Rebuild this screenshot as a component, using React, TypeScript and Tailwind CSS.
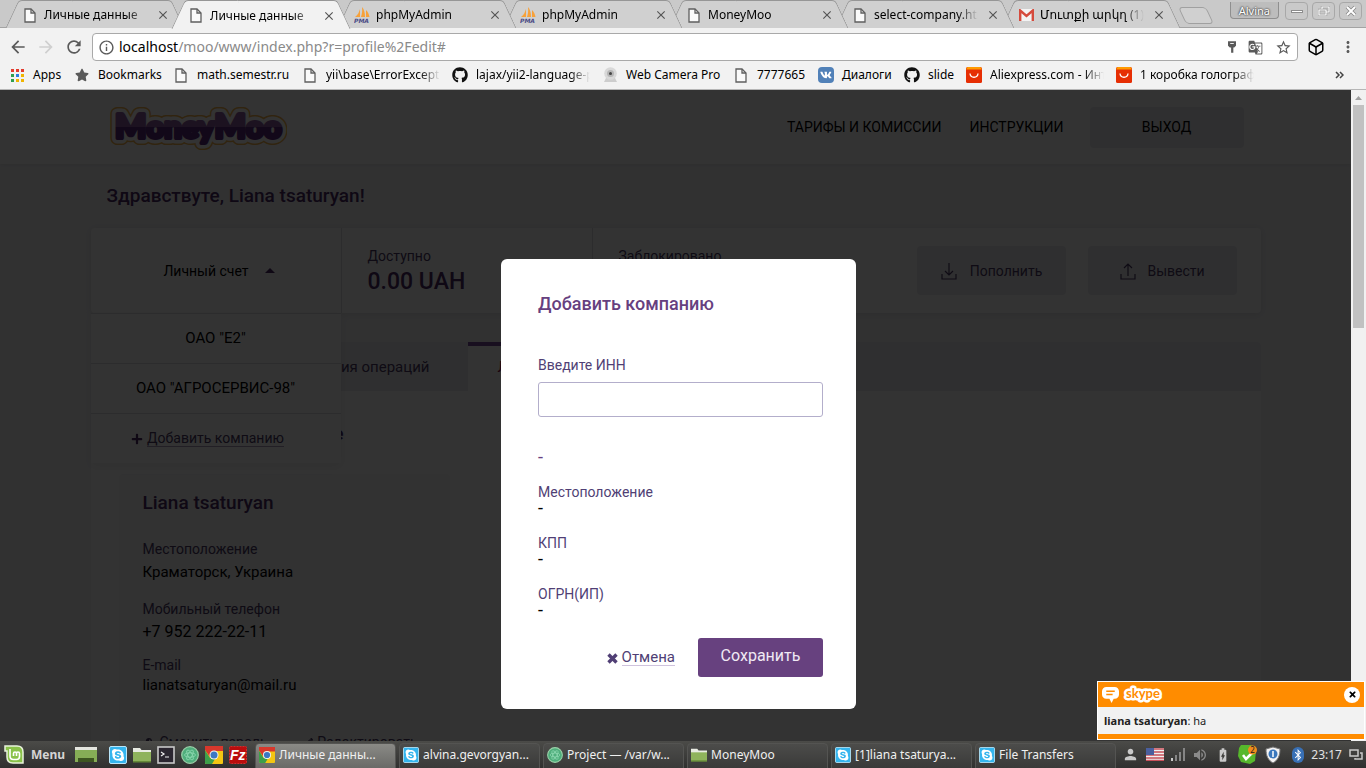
import React from "react";
import { FaGithub, FaVk, FaStar, FaPlus, FaTimes, FaSkype, FaBluetoothB, FaKey, FaPencilAlt } from "react-icons/fa";
import { MdArrowBack, MdArrowForward, MdRefresh, MdInfoOutline, MdStarBorder, MdGTranslate, MdMoreVert, MdClose, MdVolumeUp, MdPerson, MdBatteryChargingFull } from "react-icons/md";
import { Box } from "lucide-react";

const fade = "overflow-hidden whitespace-nowrap [mask-image:linear-gradient(to_right,black_calc(100%-20px),transparent)]";

function PageIcon() {
  return (
    <svg width="12" height="15" viewBox="0 0 12 15" fill="#fafafa" stroke="#5f5f5f" strokeWidth="1.3" className="shrink-0">
      <path d="M1 1h6l4 4v9H1z" />
      <path d="M7 1v4h4" fill="none" />
    </svg>
  );
}

function PmaIcon() {
  return (
    <svg width="17" height="16" viewBox="0 0 17 16" className="shrink-0">
      <path d="M6 2v8H1c3-2 4-5 5-8zM8 0c2 2 3 6 3 10H7c1-3 1.500-6 1-10zM12 3c2 2 3 4 3.500 7H12z" fill="#f7a13a" />
      <text x="0" y="16" fontSize="6" fontWeight="700" fontStyle="italic" fontFamily="DejaVu Sans" fill="#4a4a86">PMA</text>
    </svg>
  );
}

function GmailIcon() {
  return (
    <svg width="15" height="12" viewBox="0 0 15 12" className="shrink-0">
      <rect width="15" height="12" rx="1" fill="#f3f3f3" />
      <path d="M1.200 12V1.500L7.500 7l6.300-5.500V12" fill="none" stroke="#d54b3d" strokeWidth="2.400" />
    </svg>
  );
}

function AliIcon() {
  return (
    <svg width="16" height="16" viewBox="0 0 16 16" className="shrink-0">
      <rect width="16" height="16" rx="1.500" fill="#e62e04" />
      <path d="M1.500 0h13L16 2.500H0z" fill="#ff9a00" />
      <path d="M4 6.500c.5 5 7.500 5 8 0" fill="none" stroke="#fff" strokeWidth="1.300" />
    </svg>
  );
}

function ChromeIcon({ size = 18 }: { size?: number }) {
  return (
    <svg width={size} height={size} viewBox="0 0 18 18" className="shrink-0">
      <rect width="18" height="18" rx="1" fill="#f4c613" />
      <path d="M0 0h18v5H9L5 11 0 4z" fill="#d8382c" />
      <path d="M0 4l5 8 5 1-3 5H1a1 1 0 0 1-1-1z" fill="#3d9f4a" />
      <circle cx="9" cy="9" r="4.500" fill="#f3f3f3" />
      <circle cx="9" cy="9" r="3.500" fill="#3c78c3" />
    </svg>
  );
}

function SkypeIcon({ size = 18 }: { size?: number }) {
  return (
    <svg width={size} height={size} viewBox="0 0 18 18" className="shrink-0">
      <rect x=".5" y=".5" width="17" height="17" rx="1.500" fill="#35b5ee" stroke="#b9e6fa" />
      <FaSkype x="2" y="2" size={14} color="#fff" />
    </svg>
  );
}

function FolderIcon({ size = 18 }: { size?: number }) {
  return (
    <svg width={size} height={size} viewBox="0 0 18 18" className="shrink-0">
      <path d="M0 2h7l1.500 2H18v4H0z" fill="#e8ebe2" />
      <path d="M0 6h18v10H0z" fill="#8fb35c" />
      <path d="M0 15h18v1.500H0z" fill="#658a38" />
    </svg>
  );
}

function AtomIcon({ size = 18 }: { size?: number }) {
  return (
    <svg width={size} height={size} viewBox="0 0 18 18" fill="none" stroke="#8fd9b2" strokeWidth=".8" className="shrink-0">
      <circle cx="9" cy="9" r="8.300" fill="#4fae7c" stroke="#9ad0a8" strokeWidth="1.200" />
      <ellipse cx="9" cy="9" rx="5.500" ry="2.200" />
      <ellipse cx="9" cy="9" rx="5.500" ry="2.200" transform="rotate(60 9 9)" />
      <ellipse cx="9" cy="9" rx="5.500" ry="2.200" transform="rotate(120 9 9)" />
    </svg>
  );
}

function DesktopIcon() {
  return (
    <svg width="22" height="18" viewBox="0 0 22 18">
      <path d="M0 1h22v15H0z" fill="#86ad56" />
      <path d="M0 1h22v3H0z" fill="#e4e6df" />
      <path d="M3 12h16v4H3z" fill="#3d5520" />
    </svg>
  );
}

function MintIcon() {
  return (
    <svg width="20" height="19" viewBox="0 0 20 19" fill="none">
      <path d="M1 1h12c4 0 6 2 6 6v11H9c-4 0-6-2-6-6V6H1z" fill="#8ac24a" stroke="#e9f3dc" strokeWidth="1.500" />
      <path d="M6 4v7c0 2 1 3.500 3.500 3.500h3c2 0 3-1 3-3V8.500c0-2-3-2-3 0V11M12.500 8.500c0-2-3-2-3 0V11" stroke="#fff" strokeWidth="1.600" />
    </svg>
  );
}

function TerminalIcon() {
  return (
    <svg width="18" height="18" viewBox="0 0 18 18">
      <rect x="1" y="1" width="16" height="16" fill="#2b2630" stroke="#c9c9c9" strokeWidth="1.600" />
      <path d="M4 6l3 2-3 2M8 11h4" fill="none" stroke="#eee" strokeWidth="1.200" />
    </svg>
  );
}

function FilezillaIcon() {
  return (
    <svg width="18" height="18" viewBox="0 0 18 18">
      <rect x=".5" y=".5" width="17" height="17" rx="1" fill="#bb0d0d" stroke="#d92a2a" strokeDasharray="2 1" />
      <text x="1" y="14" fontSize="14" fontWeight="700" fontStyle="italic" fontFamily="Liberation Sans" fill="#fff">Fz</text>
    </svg>
  );
}

function WebcamIcon() {
  return (
    <svg width="15" height="16" viewBox="0 0 15 16" className="shrink-0">
      <path d="M3 11h9l2 4H1z" fill="#cdcdcd" />
      <circle cx="7.500" cy="6.500" r="6.300" fill="#d8d8d8" />
      <circle cx="7.500" cy="6.500" r="3.500" fill="#b5b5b5" />
      <circle cx="7.500" cy="6.500" r="1.500" fill="#444" />
    </svg>
  );
}

function AppsIcon() {
  const colors = ["#e33b2e", "#e33b2e", "#e33b2e", "#2f9e4f", "#2b7de1", "#f0b400", "#2f9e4f", "#f0b400", "#f0b400"];
  return (
    <svg width="13" height="13" viewBox="0 0 13 13" className="shrink-0">
      {colors.map((c, i) => (
        <rect key={i} x={(i % 3) * 5} y={Math.floor(i / 3) * 5} width="3" height="3" fill={c} />
      ))}
    </svg>
  );
}

type TabProps = { icon: React.ReactNode; title: string; active?: boolean; order: string };

function BrowserTab({ icon, title, active, order }: TabProps) {
  const tone = active
    ? "before:bg-[#f2f2f2] after:bg-[#f2f2f2] h-[29px]"
    : "before:bg-[#d0d0d0] after:bg-[#d0d0d0] h-7";
  return (
    <div
      className={`relative isolate flex w-[166px] pt-[2px] items-center px-2 before:absolute before:inset-y-0 before:left-0 before:-z-10 before:w-3/5 before:-skew-x-[25deg] before:rounded-tl-sm before:border-l before:border-t before:border-[#969696] before:content-[''] after:absolute after:inset-y-0 after:right-0 after:-z-10 after:w-3/5 after:skew-x-[25deg] after:rounded-tr-sm after:border-r after:border-t after:border-[#969696] after:content-[''] ${tone} ${order}`}
    >
      <span className="flex w-5 shrink-0 justify-center">{icon}</span>
      <a href="#" className={`ml-1 min-w-0 flex-1 ${fade}`}>{title}</a>
      <button type="button" aria-label="Close tab" className="ml-2 shrink-0 text-[#555]">
        <MdClose size={14} />
      </button>
    </div>
  );
}

function TabStrip() {
  return (
    <div className="flex h-7 items-start bg-[#c9c9c9] pl-3 shadow-[inset_0_-1px_0_#a3a3a3]">
      <BrowserTab icon={<PageIcon />} title="Личные данные" order="z-[7]" />
      <BrowserTab icon={<PageIcon />} title="Личные данные" active order="z-[10]" />
      <BrowserTab icon={<PmaIcon />} title="phpMyAdmin" order="z-[6]" />
      <BrowserTab icon={<PmaIcon />} title="phpMyAdmin" order="z-[5]" />
      <BrowserTab icon={<PageIcon />} title="MoneyMoo" order="z-[4]" />
      <BrowserTab icon={<PageIcon />} title="select-company.html" order="z-[3]" />
      <BrowserTab icon={<GmailIcon />} title="Մուտքի արկղ (1)" order="z-[2]" />
      <button type="button" aria-label="New tab" className="ml-2 mt-[7px] h-[17px] w-7 skew-x-[25deg] rounded-sm border border-[#a0a0a0] bg-[#d0d0d0]" />
      <div className="ml-auto flex items-start gap-1 pr-1 pt-[2px]">
        <button type="button" className="mr-[2px] h-[17px] rounded-b-sm border border-t-0 border-[#8f8f8f] bg-[#bdbdbd] px-2 text-[11px] leading-[15px] text-white [text-shadow:0_0_2px_#333,0_0_2px_#333]">Alvina</button>
        <button type="button" aria-label="Minimize" className="flex h-[18px] w-[23px] items-center justify-center rounded-sm border border-[#a8a8a8]">
          <span className="h-[3px] w-3 border border-[#8d8d8d] bg-white" />
        </button>
        <button type="button" aria-label="Restore" className="flex h-[18px] w-[23px] items-center justify-center rounded-sm border border-[#a8a8a8]">
          <svg width="12" height="10" viewBox="0 0 12 10" fill="none">
            <path d="M4 3V1h7v5H8M1 4h7v5H1z" stroke="#999" strokeWidth="2.400" />
            <path d="M4 3V1h7v5H8M1 4h7v5H1z" stroke="#fff" strokeWidth="1.200" />
          </svg>
        </button>
        <button type="button" aria-label="Close" className="flex h-[18px] w-[23px] items-center justify-center rounded-sm border border-[#a8a8a8]">
          <svg width="12" height="12" viewBox="0 0 12 12" fill="none">
            <path d="M2 2l8 8M10 2l-8 8" stroke="#888" strokeWidth="3.600" />
            <path d="M2 2l8 8M10 2l-8 8" stroke="#fff" strokeWidth="2" />
          </svg>
        </button>
      </div>
    </div>
  );
}

function Toolbar() {
  return (
    <div className="flex h-[33px] items-center bg-[#f2f2f2] pl-2 pr-[9px] pt-[5px] text-[#5a5a5a]">
      <button type="button" aria-label="Back"><MdArrowBack size={20} /></button>
      <button type="button" aria-label="Forward" className="ml-2 text-[#cfcfcf]"><MdArrowForward size={20} /></button>
      <button type="button" aria-label="Reload" className="ml-2"><MdRefresh size={20} /></button>
      <div className="ml-2 flex h-7 flex-1 items-center rounded-sm border border-[#a9a9a9] bg-white pl-[5px] pr-[5px]">
        <MdInfoOutline size={17} />
        <a href="#" className="ml-1 text-sm text-[#8a8a8a]">
          <span className="text-black">localhost</span>/moo/www/index.php?r=profile%2Fedit#
        </a>
        <div className="ml-auto flex items-center gap-3">
          <button type="button" aria-label="Saved password">
            <svg width="8" height="12" viewBox="0 0 9 13" fill="#5a5a5a">
              <path d="M0 0h9v5L7 7H6v6H3.500V7H2L0 5z" />
              <path d="M2.500 2h4v1h-4z" fill="#fff" />
            </svg>
          </button>
          <button type="button" aria-label="Translate"><MdGTranslate size={15} /></button>
          <button type="button" aria-label="Bookmark this page"><MdStarBorder size={17} /></button>
        </div>
      </div>
      <button type="button" aria-label="Extension" className="ml-[9px] text-black"><Box size={18} /></button>
      <button type="button" aria-label="Browser menu" className="ml-[14px]"><MdMoreVert size={18} /></button>
    </div>
  );
}

function Bookmark({ icon, label, box }: { icon: React.ReactNode; label: string; box: string }) {
  return (
    <a href="#" className={`flex items-center ${box}`}>
      <span className="flex w-4 shrink-0 justify-center">{icon}</span>
      <span className="ml-2 whitespace-nowrap">{label}</span>
    </a>
  );
}

function BookmarksBar() {
  return (
    <div className="flex h-[29px] items-center border-b border-[#b6b6b6] bg-[#f2f2f2] pl-[9px] pr-5">
      <Bookmark icon={<AppsIcon />} label="Apps" box="w-[65px]" />
      <Bookmark icon={<FaStar size={14} color="#5a5a5a" />} label="Bookmarks" box="w-[99px]" />
      <Bookmark icon={<PageIcon />} label="math.semestr.ru" box="w-[129px]" />
      <Bookmark icon={<PageIcon />} label="yii\base\ErrorException" box={`w-[138px] ${fade}`} />
      <div className="w-3" />
      <Bookmark icon={<FaGithub size={16} color="#111" />} label="lajax/yii2-language-picker" box={`w-[138px] ${fade}`} />
      <div className="w-3" />
      <Bookmark icon={<WebcamIcon />} label="Web Camera Pro" box="w-[131px]" />
      <Bookmark icon={<PageIcon />} label="7777665" box="w-[85px]" />
      <Bookmark icon={<span className="rounded-sm bg-[#5181b8] p-[2px] text-white"><FaVk size={12} /></span>} label="Диалоги" box="w-[86px]" />
      <Bookmark icon={<FaGithub size={16} color="#111" />} label="slide" box="w-[62px]" />
      <Bookmark icon={<AliIcon />} label="Aliexpress.com - Интернет" box={`w-[138px] ${fade}`} />
      <div className="w-3" />
      <Bookmark icon={<AliIcon />} label="1 коробка голографический" box={`w-[138px] ${fade}`} />
      <button type="button" aria-label="More bookmarks" className="ml-auto pr-[2px] text-[#444]">
        <svg width="9" height="8" viewBox="0 0 9 8" fill="none" stroke="currentColor" strokeWidth="1.500"><path d="M1 1l3 3-3 3M5 1l3 3-3 3" /></svg>
      </button>
    </div>
  );
}

function Logo() {
  const word = (
    <>
      <tspan fontSize="33">M</tspan>oney<tspan fontSize="33">M</tspan>oo
    </>
  );
  return (
    <svg width="180" height="46" viewBox="0 0 180 46" fontFamily="Lato, sans-serif" fontWeight="900" fontSize="31" strokeLinejoin="round" strokeLinecap="round" role="img" aria-label="MoneyMoo">
      <defs>
        <linearGradient id="logo" x1="0" y1="0" x2="0" y2="1">
          <stop offset="0.55" stopColor="#8b5ba0" />
          <stop offset="0.56" stopColor="#5b2a7c" />
        </linearGradient>
      </defs>
      <g aria-hidden="true">
        <text x="8" y="32" fill="#f2b24a" stroke="#f2b24a" strokeWidth="14">{word}</text>
        <text x="8" y="32" fill="#fff" stroke="#fff" strokeWidth="11">{word}</text>
      </g>
      <text x="8" y="32" fill="url(#logo)" stroke="url(#logo)" strokeWidth="4">{word}</text>
    </svg>
  );
}

function TransferIcon({ up }: { up?: boolean }) {
  return (
    <svg width="18" height="18" viewBox="0 0 18 18" fill="none" stroke="currentColor" strokeWidth="1.200">
      <path d="M2 12v5h14v-5" />
      <path d={up ? "M9 14V2M5 6l4-4 4 4" : "M9 1v12M5 9l4 4 4-4"} />
    </svg>
  );
}

function SiteHeader() {
  return (
    <header className="bg-white shadow-[0_1px_4px_rgba(0,0,0,0.08)]">
      <div className="mx-auto flex h-[74px] max-w-[1170px] items-center pl-4 pr-[17px]">
        <a href="#" className="pt-1"><Logo /></a>
        <nav className="ml-auto flex items-center text-sm text-black">
          <a href="#">ТАРИФЫ И КОМИССИИ</a>
          <a href="#" className="ml-7">ИНСТРУКЦИИ</a>
          <a href="#" className="ml-[26px] flex h-[41px] w-[154px] items-center justify-center rounded bg-[#ebebef]">ВЫХОД</a>
        </nav>
      </div>
    </header>
  );
}

function AccountBar() {
  return (
    <section className="relative z-10 flex h-[85px] rounded bg-white text-sm shadow-[0_1px_8px_rgba(0,0,0,0.1)]">
      <div className="relative w-[251px] border-r border-[#dcdce2]">
        <button type="button" className="flex h-full w-full items-center justify-center gap-4 pl-[7px] text-black">
          Личный счет
          <svg width="10" height="5" viewBox="0 0 10 5" fill="#4b2c66"><path d="M0 5l5-5 5 5z" /></svg>
        </button>
        <ul className="absolute inset-x-0 top-full bg-white text-center text-[15px] text-black shadow-[0_3px_10px_rgba(0,0,0,0.08)]">
          <li className="border-t border-[#d9d9df]"><a href="#" className="block leading-[49px]">ОАО "Е2"</a></li>
          <li className="border-t border-[#d9d9df]"><a href="#" className="block leading-[49px]">ОАО "АГРОСЕРВИС-98"</a></li>
          <li className="border-t border-[#d9d9df]">
            <button type="button" className="flex h-[49px] w-full items-center justify-center gap-1 pr-4 text-sm text-[#4a3a66]">
              <FaPlus size={12} color="#4b2c66" />
              <span className="border-b border-[#a99bb8] leading-4">Добавить компанию</span>
            </button>
          </li>
        </ul>
      </div>
      <dl className="w-[251px] border-r border-[#dcdce2] pl-[26px] pt-[18px]">
        <dt className="leading-5 text-[#4a3a66]">Доступно</dt>
        <dd className="text-[23px] font-medium leading-8 text-[#4b2c66]">0.00 UAH</dd>
      </dl>
      <dl className="flex-1 pl-[26px] pt-[18px]">
        <dt className="leading-5 text-[#4a3a66]">Заблокировано</dt>
      </dl>
      <div className="flex items-center gap-[22px] pr-6 text-[#4a3a66]">
        <button type="button" className="flex h-[49px] w-[149px] items-center justify-center gap-3 rounded bg-[#ebebef]"><TransferIcon />Пополнить</button>
        <button type="button" className="flex h-[49px] w-[149px] items-center justify-center gap-[10px] rounded bg-[#ebebef]"><TransferIcon up />Вывести</button>
      </div>
    </section>
  );
}

function ProfilePanel() {
  return (
    <section className="mt-[29px] rounded bg-white">
      <nav className="flex h-[49px] rounded-t bg-[#ebebef] text-[15px] leading-[50px]">
        <a href="#" className="w-[377px] pr-[38px] text-right text-[#4a3a66]">История операций</a>
        <a href="#" className="border-t-4 border-[#7a4a9a] bg-white px-[30px] leading-[42px] text-[#8c1445]">Личные данные</a>
      </nav>
      <div className="px-7 pt-[31px]">
        <h2 className="w-[225px] whitespace-nowrap text-right text-lg font-bold leading-6 text-[#4b2c66]">Персональные данные</h2>
        <article className="mt-7 w-[331px] rounded bg-[#f7f7f9] px-6 pb-6 pt-[17px] text-sm leading-5">
          <h3 className="text-[19px] font-medium leading-6 text-[#4b2c66]">Liana tsaturyan</h3>
          <dl className="mt-6">
            <dt className="text-[#4a3a66]">Местоположение</dt>
            <dd className="mt-[3px] text-[15px] text-black">Краматорск, Украина</dd>
            <dt className="mt-[17px] text-[#4a3a66]">Мобильный телефон</dt>
            <dd className="mt-[3px] text-base leading-5 text-black">+7 952 222-22-11</dd>
            <dt className="mt-[13px] text-[#4a3a66]">E-mail</dt>
            <dd className="text-[15px] text-black">lianatsaturyan@mail.ru</dd>
          </dl>
          <div className="mt-[37px] flex justify-between pr-2 text-[#4a3a66]">
            <button type="button" className="flex items-center gap-2"><FaKey size={9} />Сменить пароль</button>
            <button type="button" className="flex items-center gap-1"><FaPencilAlt size={8} />Редактировать</button>
          </div>
        </article>
      </div>
    </section>
  );
}

function Field({ name }: { name: string }) {
  return (
    <div>
      <dt className="text-[#503f75]">{name}</dt>
      <dd className="text-lg leading-4 text-black">-</dd>
    </div>
  );
}

function CompanyDialog() {
  return (
    <form role="dialog" aria-labelledby="dialog-title" className="w-[355px] rounded-md bg-white pb-8 pl-[37px] pr-[33px] pt-[33px] text-sm">
      <h2 id="dialog-title" className="text-lg font-medium leading-6 text-[#66407f]">Добавить компанию</h2>
      <label htmlFor="inn" className="mt-[39px] block leading-5 text-[#503f75]">Введите ИНН</label>
      <input id="inn" type="text" className="mt-[7px] block h-[35px] w-full rounded-[3px] border border-[#b3aecb] bg-white px-3 outline-none" />
      <p className="mt-[30px] text-lg leading-5 text-[#66407f]">-</p>
      <dl className="mt-[17px] flex flex-col gap-[19px] leading-4">
        <Field name="Местоположение" />
        <Field name="КПП" />
        <Field name="ОГРН(ИП)" />
      </dl>
      <div className="mt-5 flex items-center justify-end gap-[23px]">
        <button type="button" className="flex items-center gap-1 text-[#503f75]">
          <svg width="11" height="11" viewBox="0 0 11 11" fill="none" stroke="#503f75" strokeWidth="3.400" className="mt-[2px]"><path d="M1.500 1.500l8 8M9.500 1.500l-8 8" /></svg>
          <span className="border-b border-[#cfc3dd] text-[15px] leading-4">Отмена</span>
        </button>
        <button type="submit" className="h-[39px] w-[125px] rounded-[3px] bg-[#67417f] pb-1 text-base text-[#f0e9f4]">Сохранить</button>
      </div>
    </form>
  );
}

function Scrollbar() {
  return (
    <div className="flex w-[15px] flex-col items-center bg-[#f1f1f1] pt-[6px]" aria-hidden="true">
      <svg width="7" height="4" viewBox="0 0 7 4" fill="#a0a0a0"><path d="M0 4l3.500-4L7 4z" /></svg>
      <div className="mt-[5px] h-[223px] w-[11px] bg-[#c1c1c1]" />
    </div>
  );
}

function SkypeToast() {
  return (
    <aside className="absolute bottom-px right-px z-30 w-[268px] border border-white bg-[#f2f2f2] text-[11px] text-[#222]">
      <div className="flex h-[25px] items-center bg-[#ff8c00] px-1">
        <svg width="17" height="16" viewBox="0 0 16 15">
          <path d="M4 0h8a4 4 0 0 1 4 4v3a4 4 0 0 1-4 4h-1l-2 4-2-4H4a4 4 0 0 1-4-4V4a4 4 0 0 1 4-4z" fill="#fff" />
          <path d="M4 4h8M4 7h6" stroke="#ff8c00" strokeWidth="1.300" />
        </svg>
        <svg width="40" height="20" viewBox="0 0 40 20" className="ml-1" fontFamily="Lato, sans-serif" fontWeight="700" fontSize="13" strokeLinejoin="round">
          <text x="3" y="13" fill="#ff8c00" stroke="#fff" strokeWidth="5" paintOrder="stroke">skype</text>
        </svg>
        <button type="button" aria-label="Dismiss" className="ml-auto flex h-4 w-4 items-center justify-center rounded-full bg-white text-black"><FaTimes size={9} /></button>
      </div>
      <p className="h-[27px] pl-[6px] leading-[27px]"><b>liana tsaturyan</b>: ha</p>
      <div className="h-[5px] bg-[#ff8c00]" />
    </aside>
  );
}

function Task({ icon, label, active }: { icon: React.ReactNode; label: string; active?: boolean }) {
  const tone = active ? "bg-linear-to-b from-[#8a8a86] to-[#6a6a67]" : "bg-linear-to-b from-[#4c4c4a] to-[#3a3a39]";
  return (
    <button type="button" className={`flex h-[26px] w-[141px] min-w-0 items-center gap-1 rounded-t border border-[#545452] pb-[2px] pl-[3px] text-left ${tone}`}>
      {icon}
      <span className="truncate">{label}</span>
    </button>
  );
}

function Taskbar() {
  return (
    <footer className="flex h-[27px] items-center bg-linear-to-b from-[#4b4b48] to-[#30302f] pl-[4px] pr-[3px] text-xs text-[#f0f0f0]">
      <button type="button" className="flex items-center gap-[7px] font-bold text-[#d5d5d5]"><MintIcon />Menu</button>
      <div className="ml-[10px] flex items-center"><DesktopIcon /></div>
      <div className="ml-3 flex items-center gap-[6px]">
        <SkypeIcon /><FolderIcon /><TerminalIcon /><AtomIcon /><ChromeIcon /><FilezillaIcon />
      </div>
      <div className="ml-2 flex gap-[3px] pt-[2px]">
        <Task active icon={<ChromeIcon size={16} />} label="Личные данны..." />
        <Task icon={<SkypeIcon size={16} />} label="alvina.gevorgyan..." />
        <Task icon={<AtomIcon size={16} />} label="Project — /var/w..." />
        <Task icon={<FolderIcon size={16} />} label="MoneyMoo" />
        <Task icon={<SkypeIcon size={16} />} label="[1]liana tsaturya..." />
        <Task icon={<SkypeIcon size={16} />} label="File Transfers" />
      </div>
      <div className="ml-auto flex shrink-0 items-center gap-[7px] whitespace-nowrap text-[#c9c9c9]">
        <MdPerson size={17} />
        <svg width="18" height="13" viewBox="0 0 18 13">
          <rect width="18" height="13" fill="#f0f0f0" />
          <path d="M0 1h18M0 4h18M0 7h18M0 10h18M0 12.500h18" stroke="#c8505a" strokeWidth="1.300" />
          <rect width="8" height="7" fill="#4a5f9e" />
        </svg>
        <svg width="14" height="13" viewBox="0 0 14 13">
          <path d="M0 10h2v3H0z" fill="#c9c9c9" />
          <path d="M4 7h2v6H4zM8 4h2v9H8zM12 0h2v13h-2z" fill="#858585" />
        </svg>
        <MdVolumeUp size={16} color="#8a8a8a" />
        <MdBatteryChargingFull size={16} />
        <svg width="20" height="19" viewBox="0 0 20 19">
          <path d="M3 0h10l5 6-1 10-5 3-9-2-3-6 1-8z" fill="#56b82c" />
          <path d="M5 10l3 4 6-6" fill="none" stroke="#fff" strokeWidth="2.500" />
          <circle cx="14.500" cy="5" r="4.500" fill="#f08c1c" />
          <text x="12.300" y="8" fontSize="8" fontFamily="Noto Sans" fill="#222">2</text>
        </svg>
        <svg width="16" height="18" viewBox="0 0 16 18">
          <path d="M8 1l7 2c0 7-2 11-7 14C3 14 1 10 1 3z" fill="#f3f3f3" stroke="#777" />
          <circle cx="8" cy="8" r="4.500" fill="#3b78bd" />
          <path d="M8 5v6" stroke="#fff" strokeWidth="1.500" />
        </svg>
        <span className="ml-1 flex h-4 w-3 items-center justify-center rounded-full bg-[#3870b5] text-white"><FaBluetoothB size={12} /></span>
        <time className="text-[#e2e2e2]">23:17</time>
        <svg width="14" height="11" viewBox="0 0 14 11" fill="none" stroke="#c9c9c9" strokeWidth="1.500">
          <path d="M1 1h8v6H1zM11 4h2v6H6V9" />
        </svg>
      </div>
    </footer>
  );
}

export default function App() {
  return (
    <div className="flex h-screen flex-col overflow-hidden font-['Noto_Sans','DejaVu_Sans',sans-serif] text-xs text-black">
      <TabStrip />
      <Toolbar />
      <BookmarksBar />
      <div className="relative flex min-h-0 flex-1">
        <main className="relative min-w-0 flex-1 overflow-hidden bg-[#f4f4f6] font-[Roboto,sans-serif]">
          <SiteHeader />
          <div className="mx-auto max-w-[1170px]">
            <h1 className="px-4 py-5 text-[19px] font-medium leading-6 text-[#4b2c66]">Здравствуте, Liana tsaturyan!</h1>
            <AccountBar />
            <ProfilePanel />
          </div>
          <div className="absolute inset-0 z-20 flex items-start justify-center bg-black/80 pl-[6px] pt-[169px]">
            <CompanyDialog />
          </div>
        </main>
        <Scrollbar />
        <SkypeToast />
      </div>
      <Taskbar />
    </div>
  );
}
